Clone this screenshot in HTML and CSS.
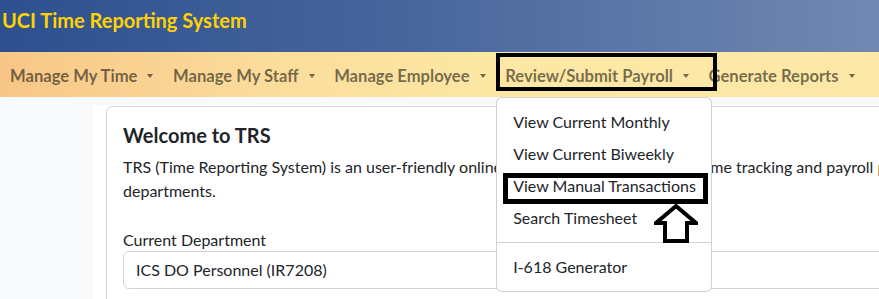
FILE: index.html
```html
<!DOCTYPE html>
<html lang="en">
<head>
<meta charset="utf-8">
<title>UCI Time Reporting System</title>
<link rel="stylesheet" href="styles.css">
</head>
<body>
<header class="brandbar">
  <span class="brand">UCI Time Reporting System</span>
</header>
<nav class="menubar">
  <ul class="nav-list">
    <li class="nav-item"><a class="nav-link">Manage My Time<span class="caret"></span></a></li>
    <li class="nav-item"><a class="nav-link">Manage My Staff<span class="caret"></span></a></li>
    <li class="nav-item"><a class="nav-link">Manage Employee<span class="caret"></span></a></li>
    <li class="nav-item open">
      <a class="nav-link">Review/Submit Payroll<span class="caret"></span></a>
      <span class="mark-box nav-mark"></span>
      <div class="dropdown-menu">
        <a class="dropdown-item">View Current Monthly</a>
        <a class="dropdown-item">View Current Biweekly</a>
        <a class="dropdown-item marked">View Manual Transactions<span class="mark-box item-mark"></span></a>
        <a class="dropdown-item">Search Timesheet</a>
        <hr class="dropdown-divider">
        <a class="dropdown-item">I-618 Generator</a>
        <svg class="mark-arrow" width="44" height="41" viewBox="0 0 44 41">
          <polygon points="22,3 42,20 33,20 33,38 11,38 11,20 2,20" fill="#fff" stroke="#000" stroke-width="4" stroke-linejoin="miter"/>
        </svg>
      </div>
    </li>
    <li class="nav-item"><a class="nav-link">Generate Reports<span class="caret"></span></a></li>
  </ul>
</nav>
<div class="page">
  <aside class="sidebar"></aside>
  <main class="content">
    <section class="card">
      <h5 class="card-title">Welcome to TRS</h5>
      <p class="card-text">TRS (Time Reporting System) is an user-friendly online tool designed to streamline time tracking and payroll processing for UCI departments.</p>
      <div class="form-group">
        <label class="form-label">Current Department</label>
        <div class="form-select">ICS DO Personnel (IR7208)</div>
      </div>
    </section>
  </main>
</div>
</body>
</html>
```
FILE: styles.css
```css
* { box-sizing: border-box; }
html, body { margin: 0; padding: 0; }
body {
  font-family: Lato, "Open Sans", sans-serif;
  font-size: 16px;
  line-height: 24px;
  color: #212529;
  background: #f8f9fa;
  width: 879px;
  height: 299px;
  overflow: hidden;
}

.brandbar {
  height: 52px;
  background: linear-gradient(to right, #2d508f 0%, #47659c 45%, #7189b2 100%);
  padding: 8px 0 0 2px;
}
.brand {
  display: block;
  color: #ffd200;
  font-weight: 700;
  font-size: 20px;
  line-height: 24px;
}

.menubar {
  height: 45px;
  background: linear-gradient(to right, #f7c687 0%, #fbdc9b 30%, #fce7a4 55%, #fde9a7 100%);
  padding: 2px 0 0 2px;
  position: relative;
  z-index: 2;
}
.nav-list {
  list-style: none;
  margin: 0;
  padding: 0;
  display: flex;
  gap: 3.6px;
}
.nav-item { position: relative; }
.nav-link {
  display: flex;
  align-items: center;
  height: 40px;
  padding: 3px 8px 0 8px;
  font-weight: 700;
  font-size: 16.6px;
  color: rgba(0, 0, 0, 0.55);
  white-space: nowrap;
}
.caret {
  display: inline-block;
  margin-left: 10px;
  margin-top: 0;
  width: 0;
  height: 0;
  border-top: 4px solid currentColor;
  border-left: 3.5px solid transparent;
  border-right: 3.5px solid transparent;
}

.mark-box {
  position: absolute;
  border: 4px solid #000;
  pointer-events: none;
}
.nav-mark {
  left: -1px;
  top: -1px;
  width: 221px;
  height: 38px;
}

.dropdown-menu {
  position: absolute;
  left: -1px;
  top: 43px;
  width: 216px;
  background: #fff;
  border: 1px solid rgba(0, 0, 0, 0.175);
  border-radius: 6px;
  padding: 8px 0;
}
.dropdown-item {
  display: block;
  position: relative;
  padding: 4px 16px;
  font-size: 16px;
  line-height: 24px;
  color: #212529;
  white-space: nowrap;
}
.item-mark {
  left: 6px;
  top: 3px;
  width: 205px;
  height: 31px;
  border-width: 5px;
}
.dropdown-divider {
  margin: 8px 0;
  border: 0;
  border-top: 1px solid rgba(0, 0, 0, 0.175);
  height: 0;
}
.mark-arrow {
  position: absolute;
  left: 157px;
  top: 105px;
}

.page {
  display: flex;
  padding-top: 8px;
}
.sidebar {
  flex: 0 0 93px;
}
.content {
  flex: 0 0 1100px;
  background: #fff;
  min-height: 200px;
  padding: 1px 0 0 13px;
}
.card {
  border: 1px solid #d6d8db;
  border-radius: 6px;
  padding: 16px 16px 40px 16px;
  background: #fff;
}
.card-title {
  margin: 0 0 8px 0;
  font-size: 20px;
  font-weight: 700;
  line-height: 24px;
}
.card-text {
  margin: 0 0 25px 0;
  width: 950px;
}
.form-group { margin: 0; }
.form-label {
  display: block;
  line-height: 23px;
}
.form-select {
  height: 38px;
  border: 1px solid #ced4da;
  border-radius: 6px;
  padding: 6px 12px;
  line-height: 24px;
  width: 1000px;
}
```
